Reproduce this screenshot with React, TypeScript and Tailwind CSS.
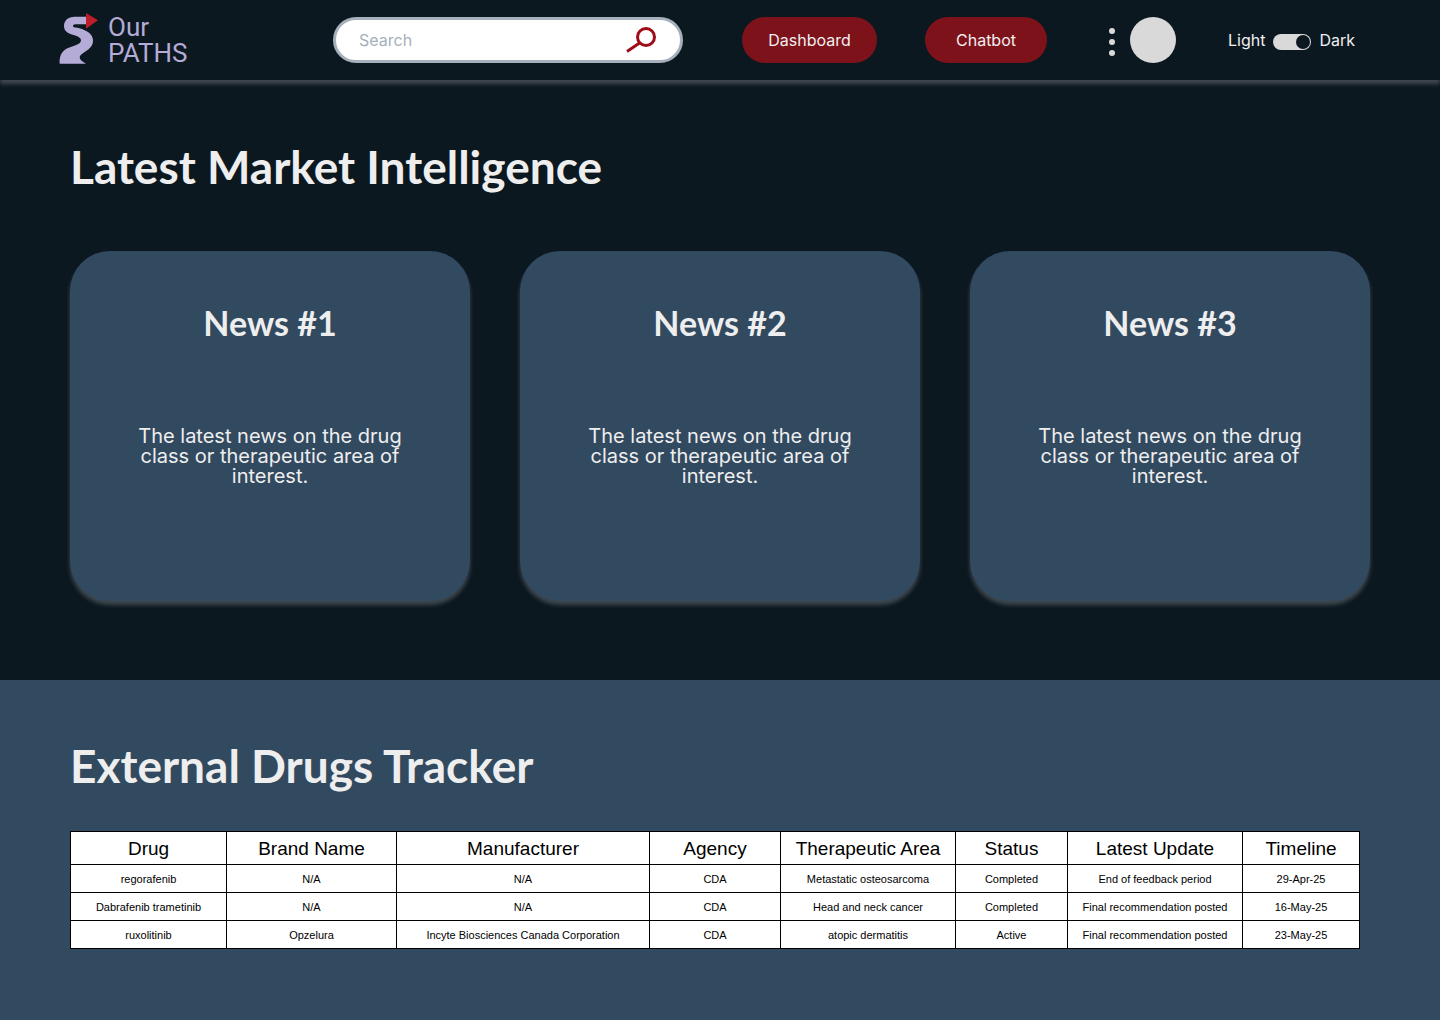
import { useState } from "react";

const news = ["News #1", "News #2", "News #3"];

const columns = [
  { name: "Drug", width: "w-[156px]" },
  { name: "Brand Name", width: "w-[170px]" },
  { name: "Manufacturer", width: "w-[253px]" },
  { name: "Agency", width: "w-[131px]" },
  { name: "Therapeutic Area", width: "w-[175px]" },
  { name: "Status", width: "w-[112px]" },
  { name: "Latest Update", width: "w-[175px]" },
  { name: "Timeline", width: "w-[117px]" },
];

const drugs = [
  ["regorafenib", "N/A", "N/A", "CDA", "Metastatic osteosarcoma", "Completed", "End of feedback period", "29-Apr-25"],
  ["Dabrafenib trametinib", "N/A", "N/A", "CDA", "Head and neck cancer", "Completed", "Final recommendation posted", "16-May-25"],
  ["ruxolitinib", "Opzelura", "Incyte Biosciences Canada Corporation", "CDA", "atopic dermatitis", "Active", "Final recommendation posted", "23-May-25"],
];

function Logo() {
  return (
    <a href="#" className="flex shrink-0 items-start gap-[9px] text-[#b4abd6]">
      <svg viewBox="54 36 123 159" className="h-[53px] w-[41px]" aria-hidden="true">
        <path
          fill="currentColor"
          d="M138 50H104C84 50 72 61 72 78C72 94 84 100 98 104C112 108 123 112 123 121C123 131 108 136 90 142C68 149 57 165 59 191H138C126 184 119 179 119 172C119 164 132 158 144 149C155 141 160 132 159 120C158 103 144 94 126 87C112 82 99 84 99 78C99 74 104 73 112 73H138Z"
        />
        <path fill="#bd1e2b" d="M138 39L174 61L138 86Z" />
      </svg>
      <span className="flex flex-col pt-0.5 font-['Roboto',sans-serif] text-[26px] leading-[26px]">
        <span>Our</span>
        <span>PATHS</span>
      </span>
    </a>
  );
}

function Header() {
  const [dark, setDark] = useState(true);
  return (
    <header className="relative flex h-20 items-center bg-[#0c1820] px-[58px] text-base text-[#f0eff0] shadow-[0_4px_4px_rgba(217,217,217,0.25)]">
      <div className="w-[275px] shrink-0 pb-0.5">
        <Logo />
      </div>
      <form role="search" className="flex h-[46px] w-[350px] items-center rounded-full border-3 border-[#a5b0bc] bg-white pr-6 pl-[23px]">
        <input
          type="text"
          aria-label="Search"
          placeholder="Search"
          className="min-w-0 flex-1 bg-transparent text-[#0c1820] outline-none placeholder:text-[#a5b0bc]"
        />
        <button type="button" aria-label="Submit search" className="shrink-0">
          <svg viewBox="0 0 30 26" className="h-[26px] w-[30px]" fill="none" stroke="#9f0c17" aria-hidden="true">
            <circle cx="20" cy="10" r="8.5" strokeWidth="3" />
            <path d="M13.5 16L1 24.5" strokeWidth="3" />
          </svg>
        </button>
      </form>
      <button type="button" className="ml-[59px] h-[46px] w-[135px] shrink-0 rounded-full bg-[#7e121b]">
        Dashboard
      </button>
      <button type="button" className="ml-12 h-[46px] w-[122px] shrink-0 rounded-full bg-[#7e121b]">
        Chatbot
      </button>
      <button type="button" aria-label="More options" className="ml-[62px] flex flex-col gap-[5px] pt-1">
        <span className="size-[6px] rounded-full bg-[#d9d9d9]" />
        <span className="size-[6px] rounded-full bg-[#d9d9d9]" />
        <span className="size-[6px] rounded-full bg-[#d9d9d9]" />
      </button>
      <button type="button" aria-label="Account" className="ml-[15px] size-[46px] shrink-0 rounded-full bg-[#d9d9d9]" />
      <div className="ml-[52px] flex items-center gap-2">
        <span>Light</span>
        <button
          type="button"
          role="switch"
          aria-checked={dark}
          aria-label="Dark mode"
          onClick={() => setDark(!dark)}
          className={`mt-1 flex h-4 w-[38px] items-center rounded-full bg-[#d9d9d9] px-px ${dark ? "justify-end" : "justify-start"}`}
        >
          <span className="size-[14px] rounded-full bg-[#0c1820]" />
        </button>
        <span>Dark</span>
      </div>
    </header>
  );
}

export default function App() {
  return (
    <div className="flex min-h-screen flex-col bg-[#0c1820] font-['Inter',sans-serif] text-[#efeeef]">
      <Header />
      <main className="flex flex-1 flex-col">
        <section className="px-[70px] pt-[57px] pb-[79px]">
          <h1 className="font-['Lato',sans-serif] text-[46px] leading-[60px] font-bold">Latest Market Intelligence</h1>
          <div className="mt-[54px] grid grid-cols-3 gap-[50px]">
            {news.map((title) => (
              <article
                key={title}
                className="flex min-h-[350px] flex-col items-center rounded-[40px] bg-[#324a60] px-14 pt-[52px] text-center shadow-[0_4px_4px_rgba(217,217,217,0.25)]"
              >
                <h2 className="font-['Lato',sans-serif] text-[34px] leading-10 font-bold">{title}</h2>
                <p className="mt-[83px] text-xl leading-5">The latest news on the drug class or therapeutic area of interest.</p>
              </article>
            ))}
          </div>
        </section>
        <section className="flex-1 bg-[#324a60] px-[70px] pt-14 pb-[70px]">
          <h1 className="font-['Lato',sans-serif] text-[46px] leading-[60px] font-bold">External Drugs Tracker</h1>
          <div className="mt-[35px] pr-[10px]">
            <table className="w-full table-fixed border-collapse bg-white text-center font-['Liberation_Sans',Arial,sans-serif] text-black">
              <thead>
                <tr className="h-[33px]">
                  {columns.map((column) => (
                    <th key={column.name} scope="col" className={`border border-black px-0 pt-0.5 pb-0 text-[19px] leading-6 font-normal ${column.width}`}>
                      {column.name}
                    </th>
                  ))}
                </tr>
              </thead>
              <tbody>
                {drugs.map((row) => (
                  <tr key={row[0]} className="h-7">
                    {row.map((cell, i) => (
                      <td key={i} className="border border-black p-0 text-[11px] leading-4">
                        {cell}
                      </td>
                    ))}
                  </tr>
                ))}
              </tbody>
            </table>
          </div>
        </section>
      </main>
    </div>
  );
}
